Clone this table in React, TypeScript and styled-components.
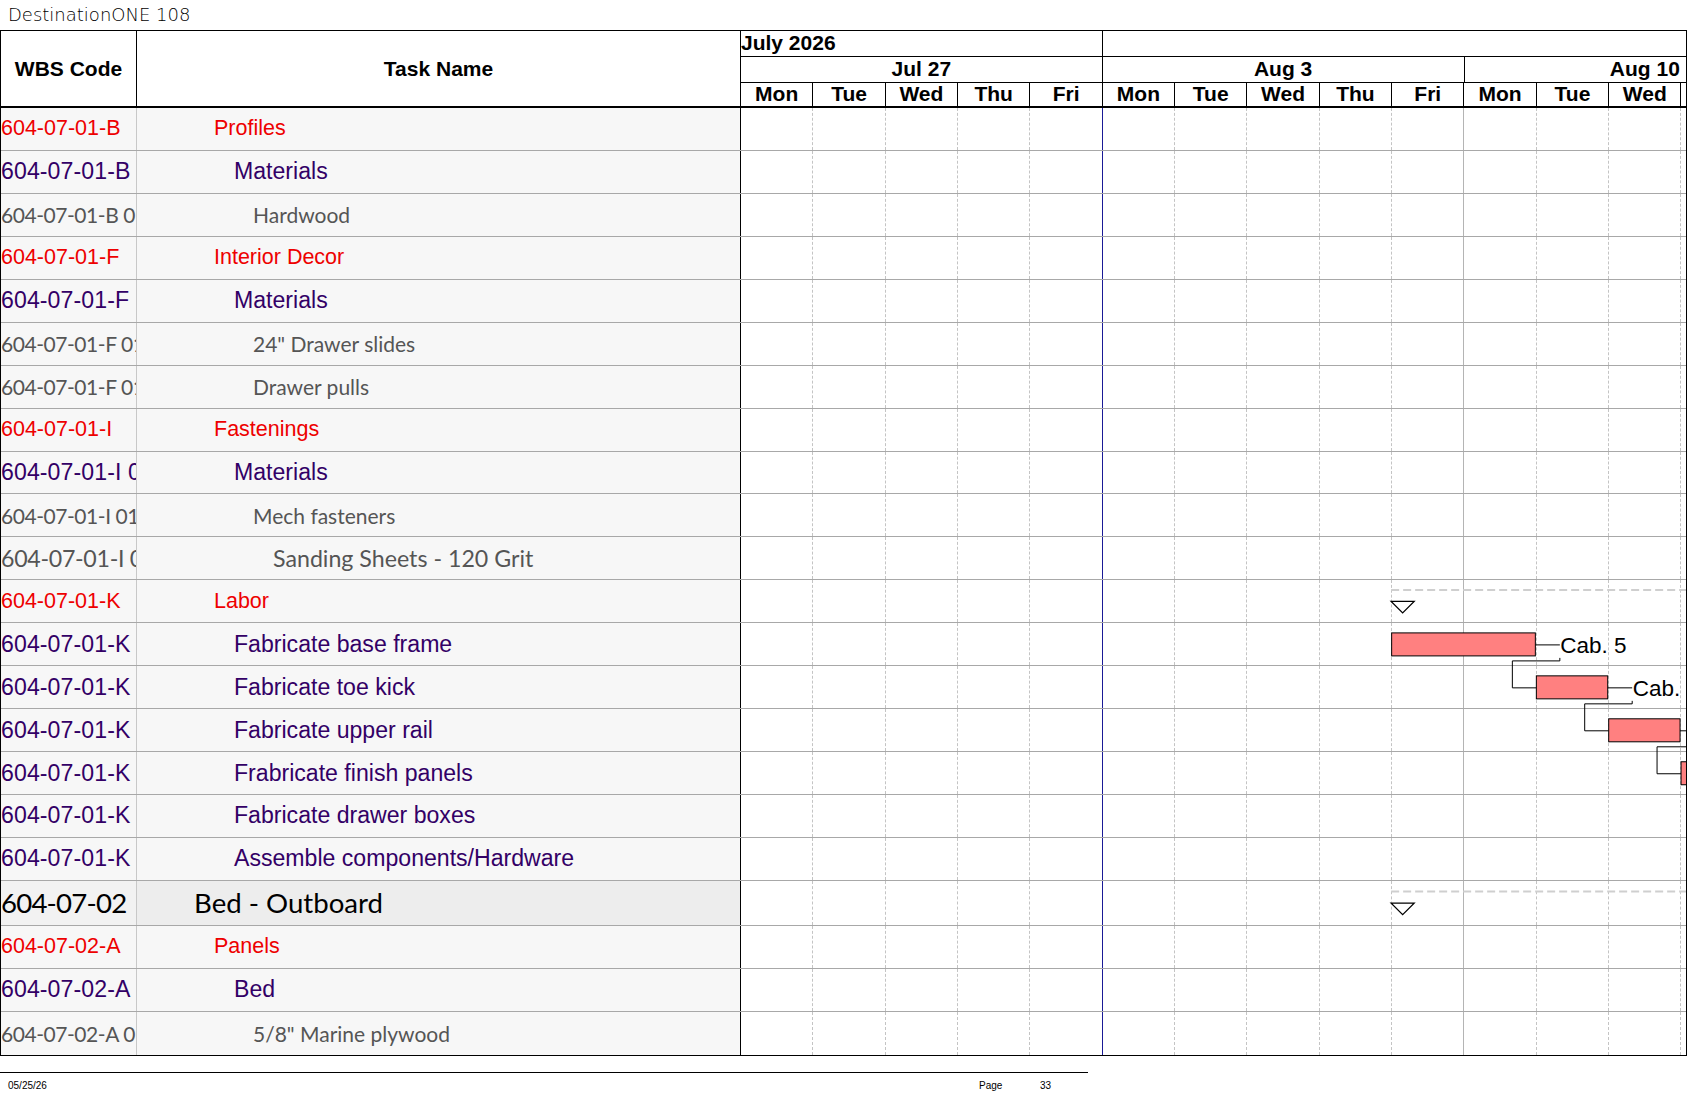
import React from "react";
import styled, { createGlobalStyle, css } from "styled-components";

const DAY_W = 72.35;
const WEEK_W = DAY_W * 5;
const ROW_H = 42.95;

type Level = "red" | "purple" | "gray" | "grayBig" | "summary";

interface Row {
  wbs: string;
  task: string;
  level: Level;
  height: number;
}

const rows: Row[] = [
  { wbs: "604-07-01-B", task: "Profiles", level: "red", height: ROW_H },
  { wbs: "604-07-01-B 01", task: "Materials", level: "purple", height: ROW_H },
  { wbs: "604-07-01-B 01 01", task: "Hardwood", level: "gray", height: ROW_H },
  { wbs: "604-07-01-F", task: "Interior Decor", level: "red", height: ROW_H },
  { wbs: "604-07-01-F 01", task: "Materials", level: "purple", height: ROW_H },
  { wbs: "604-07-01-F 01 01", task: '24" Drawer slides', level: "gray", height: ROW_H },
  { wbs: "604-07-01-F 01 02", task: "Drawer pulls", level: "gray", height: ROW_H },
  { wbs: "604-07-01-I", task: "Fastenings", level: "red", height: ROW_H },
  { wbs: "604-07-01-I 01", task: "Materials", level: "purple", height: ROW_H },
  { wbs: "604-07-01-I 01 01", task: "Mech fasteners", level: "gray", height: ROW_H },
  { wbs: "604-07-01-I 01 02", task: "Sanding Sheets - 120 Grit", level: "grayBig", height: ROW_H },
  { wbs: "604-07-01-K", task: "Labor", level: "red", height: ROW_H },
  { wbs: "604-07-01-K 01", task: "Fabricate base frame", level: "purple", height: ROW_H },
  { wbs: "604-07-01-K 02", task: "Fabricate toe kick", level: "purple", height: ROW_H },
  { wbs: "604-07-01-K 03", task: "Fabricate upper rail", level: "purple", height: ROW_H },
  { wbs: "604-07-01-K 04", task: "Frabricate finish panels", level: "purple", height: ROW_H },
  { wbs: "604-07-01-K 05", task: "Fabricate drawer boxes", level: "purple", height: ROW_H },
  { wbs: "604-07-01-K 06", task: "Assemble components/Hardware", level: "purple", height: ROW_H },
  { wbs: "604-07-02", task: "Bed - Outboard", level: "summary", height: 45 },
  { wbs: "604-07-02-A", task: "Panels", level: "red", height: 43 },
  { wbs: "604-07-02-A 01", task: "Bed", level: "purple", height: 43 },
  { wbs: "604-07-02-A 01 01", task: '5/8" Marine plywood', level: "gray", height: 43 },
];

const weeks = [
  { label: "Jul 27", edge: "blue" as const },
  { label: "Aug 3", edge: "solid" as const },
  { label: "Aug 10", edge: "solid" as const },
];
const dayNames = ["Mon", "Tue", "Wed", "Thu", "Fri"];

const levelStyles: Record<Level, ReturnType<typeof css>> = {
  red: css`
    font-family: "Liberation Sans", Arial, sans-serif;
    font-size: 21.5px;
    color: #ee0000;
  `,
  purple: css`
    font-family: "Liberation Sans", Arial, sans-serif;
    font-size: 23.1px;
    color: #330066;
  `,
  gray: css`
    font-family: Lato, "Open Sans", sans-serif;
    font-size: 21px;
    color: #555555;
  `,
  grayBig: css`
    font-family: Lato, "Open Sans", sans-serif;
    font-size: 23.2px;
    color: #555555;
  `,
  summary: css`
    font-family: Lato, "Open Sans", sans-serif;
    font-size: 27.6px;
    color: #000000;
  `,
};

const wbsTracking: Record<Level, number> = {
  red: 0,
  purple: 0.1,
  gray: -0.45,
  grayBig: -0.3,
  summary: -0.8,
};

const indent: Record<Level, number> = {
  summary: 57,
  red: 77,
  purple: 97,
  gray: 116,
  grayBig: 136,
};

const GlobalStyle = createGlobalStyle`
  html, body { margin: 0; padding: 0; background: #ffffff; }
  body { font-family: "Liberation Sans", Arial, sans-serif; }
  * { box-sizing: border-box; }
`;

const Page = styled.div`
  width: 1687px;
  height: 1097px;
  overflow: hidden;
  background: #ffffff;
`;

const Title = styled.div`
  height: 30px;
  padding: 3px 0 0 8px;
  font-family: "DejaVu Sans", sans-serif;
  font-weight: 200;
  font-size: 18px;
  line-height: 23px;
  color: #000000;
`;

const Sheet = styled.div`
  display: flex;
  width: 1687px;
  border: 1px solid #000;
`;

const LeftPane = styled.div`
  flex: 0 0 740px;
  display: flex;
  flex-direction: column;
`;

const LeftHeader = styled.div`
  display: grid;
  grid-template-columns: 136px 604px;
  height: 77px;
  border-bottom: 2px solid #000;
`;

const HeaderCell = styled.div`
  display: flex;
  align-items: center;
  justify-content: center;
  border-right: 1px solid #000;
  font-family: "Liberation Sans", Arial, sans-serif;
  font-weight: bold;
  font-size: 21px;
  color: #000;
`;

const LeftRow = styled.div<{ $h: number }>`
  display: grid;
  grid-template-columns: 136px 604px;
  height: ${(p) => p.$h}px;
  border-bottom: 1px solid #a8a8a8;
  &:last-child {
    border-bottom: none;
  }
`;

const WbsCell = styled.div<{ $level: Level }>`
  display: flex;
  align-items: center;
  overflow: hidden;
  white-space: nowrap;
  border-right: 1px solid #c8c8c8;
  background: ${(p) => (p.$level === "summary" ? "#f2f2f2" : "#f7f7f7")};
  ${(p) => levelStyles[p.$level]}
  letter-spacing: ${(p) => wbsTracking[p.$level]}px;
`;

const TaskCell = styled.div<{ $level: Level }>`
  display: flex;
  align-items: center;
  overflow: hidden;
  white-space: nowrap;
  border-right: 1px solid #000;
  padding-left: ${(p) => indent[p.$level]}px;
  background: ${(p) => (p.$level === "summary" ? "#ededed" : "#f7f7f7")};
  ${(p) => levelStyles[p.$level]}
`;

const ChartPane = styled.div`
  flex: 1 1 auto;
  min-width: 0;
  overflow: hidden;
  display: flex;
  flex-direction: column;
`;

const ScaleRow = styled.div<{ $h: number; $thick?: boolean }>`
  display: flex;
  height: ${(p) => p.$h}px;
  border-bottom: ${(p) => (p.$thick ? 2 : 1)}px solid #000;
  font-family: "Liberation Sans", Arial, sans-serif;
  font-weight: bold;
  font-size: 21px;
  color: #000;
  white-space: nowrap;
`;

const ScaleCell = styled.div<{ $w: number; $align: "left" | "center" }>`
  flex: 0 0 ${(p) => p.$w}px;
  display: flex;
  align-items: center;
  justify-content: ${(p) => (p.$align === "left" ? "flex-start" : "center")};
  border-right: 1px solid #000;
  overflow: hidden;
  padding-bottom: 2px;
`;

const ChartBody = styled.div`
  position: relative;
  display: flex;
  flex-direction: column;
`;

const ChartRow = styled.div<{ $h: number }>`
  display: flex;
  height: ${(p) => p.$h}px;
  border-bottom: 1px solid #a8a8a8;
  &:last-of-type {
    border-bottom: none;
  }
`;

const GridDay = styled.div<{ $edge: "dash" | "blue" | "solid" }>`
  flex: 0 0 ${DAY_W}px;
  height: 100%;
  border-right: 1px
    ${(p) =>
      p.$edge === "dash"
        ? "dashed #c4c4c4"
        : p.$edge === "blue"
        ? "solid #1a1a96"
        : "solid #b4b4b4"};
`;

const Overlay = styled.svg`
  position: absolute;
  left: 0;
  top: 0;
  width: 1100px;
  height: 950px;
  pointer-events: none;
`;

const BarLabel = styled.text`
  font-family: "Liberation Sans", Arial, sans-serif;
  font-size: 22.5px;
  fill: #000;
`;

const Footer = styled.div`
  margin-top: 16px;
  width: 1088px;
  border-top: 1px solid #000;
  display: grid;
  grid-template-columns: 971px 61px auto;
  padding: 7px 0 0 8px;
  font-family: "Liberation Sans", Arial, sans-serif;
  font-size: 10px;
  color: #000;
`;

const dayLine = (k: number) => k * DAY_W - 1;

const rowTops: number[] = [];
{
  let acc = 0;
  for (const r of rows) {
    rowTops.push(acc);
    acc += r.height;
  }
}

const bars = [
  { row: 12, start: 9, len: 2 },
  { row: 13, start: 11, len: 1 },
  { row: 14, start: 12, len: 1 },
  { row: 15, start: 13, len: 1 },
];

const summaries = [
  { row: 11, start: 9, dy: 9.5 },
  { row: 18, start: 9, dy: 10.5 },
];

function GanttOverlay() {
  return (
    <Overlay viewBox="0 0 1100 950">
      {summaries.map((s, i) => {
        const x = dayLine(s.start);
        const t = rowTops[s.row];
        return (
          <g key={`s${i}`}>
            <line
              x1={x}
              x2={1100}
              y1={t + s.dy}
              y2={t + s.dy}
              stroke="#cfcfcf"
              strokeWidth={2}
              strokeDasharray="8 4"
            />
            <polygon
              points={`${x},${t + s.dy + 11.5} ${x + 23},${t + s.dy + 11.5} ${x + 11.5},${t + s.dy + 23}`}
              fill="#fff"
              stroke="#000"
              strokeWidth={1.3}
            />
          </g>
        );
      })}
      {bars.map((b, i) => {
        const t = rowTops[b.row];
        const x = dayLine(b.start) + 0.5;
        const w = b.len * DAY_W - 1;
        const right = x + w;
        const cy = t + 21;
        const next = bars[i + 1];
        let link: string | null = null;
        if (next) {
          const nt = rowTops[next.row];
          const nx = dayLine(next.start) + 0.5;
          const lx = right + 24.5;
          link = `M ${lx} ${t + 34.5} V ${t + 37.5} H ${nx - 24} V ${nt + 21.5} H ${nx}`;
        }
        return (
          <g key={`b${i}`}>
            <rect x={x} y={t + 9.5} width={w} height={23} fill="#ff8080" stroke="#000" strokeWidth={1} />
            <line x1={right} x2={right + 24.5} y1={cy + 0.5} y2={cy + 0.5} stroke="#000" strokeWidth={1} />
            <BarLabel x={right + 25} y={cy + 8.5}>
              Cab. 5
            </BarLabel>
            {link && <path d={link} fill="none" stroke="#000" strokeWidth={1} />}
          </g>
        );
      })}
    </Overlay>
  );
}

export default function App() {
  return (
    <Page>
      <GlobalStyle />
      <Title>DestinationONE 108</Title>
      <Sheet>
        <LeftPane>
          <LeftHeader>
            <HeaderCell>WBS Code</HeaderCell>
            <HeaderCell>Task Name</HeaderCell>
          </LeftHeader>
          {rows.map((r, i) => (
            <LeftRow key={i} $h={r.height}>
              <WbsCell $level={r.level}>{r.wbs}</WbsCell>
              <TaskCell $level={r.level}>{r.task}</TaskCell>
            </LeftRow>
          ))}
        </LeftPane>
        <ChartPane>
          <ScaleRow $h={26}>
            <ScaleCell $w={WEEK_W} $align="left">
              July 2026
            </ScaleCell>
            <ScaleCell $w={WEEK_W * 2} $align="left" />
          </ScaleRow>
          <ScaleRow $h={26}>
            {weeks.map((w) => (
              <ScaleCell key={w.label} $w={WEEK_W} $align="center">
                {w.label}
              </ScaleCell>
            ))}
          </ScaleRow>
          <ScaleRow $h={25} $thick>
            {weeks.map((w) =>
              dayNames.map((d) => (
                <ScaleCell key={w.label + d} $w={DAY_W} $align="center">
                  {d}
                </ScaleCell>
              ))
            )}
          </ScaleRow>
          <ChartBody>
            {rows.map((r, i) => (
              <ChartRow key={i} $h={r.height}>
                {weeks.map((w) =>
                  dayNames.map((d, di) => (
                    <GridDay key={w.label + d} $edge={di === 4 ? w.edge : "dash"} />
                  ))
                )}
              </ChartRow>
            ))}
            <GanttOverlay />
          </ChartBody>
        </ChartPane>
      </Sheet>
      <Footer>
        <span>05/25/26</span>
        <span>Page</span>
        <span>33</span>
      </Footer>
    </Page>
  );
}
